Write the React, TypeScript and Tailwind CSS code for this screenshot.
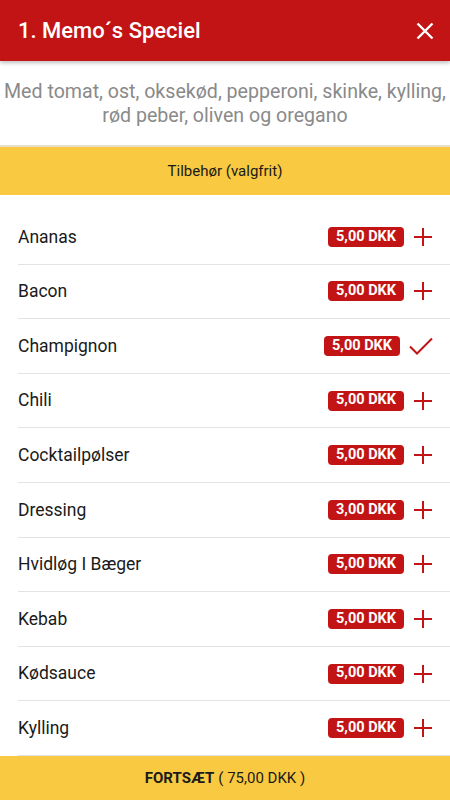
import { useState } from "react";

const extras = [
  { name: "Ananas", price: "5,00 DKK" },
  { name: "Bacon", price: "5,00 DKK" },
  { name: "Champignon", price: "5,00 DKK", selected: true },
  { name: "Chili", price: "5,00 DKK" },
  { name: "Cocktailpølser", price: "5,00 DKK" },
  { name: "Dressing", price: "3,00 DKK" },
  { name: "Hvidløg I Bæger", price: "5,00 DKK" },
  { name: "Kebab", price: "5,00 DKK" },
  { name: "Kødsauce", price: "5,00 DKK" },
  { name: "Kylling", price: "5,00 DKK" },
];

function PlusIcon() {
  return (
    <svg width="20" height="20" viewBox="0 0 20 20" className="shrink-0">
      <path d="M10 1v18M1 10h18" stroke="#c21414" strokeWidth="2" fill="none" />
    </svg>
  );
}

function CheckIcon() {
  return (
    <svg width="24" height="20" viewBox="0 0 24 20" className="shrink-0">
      <path d="M1 10.5l7 7L23 2.5" stroke="#c21414" strokeWidth="2" fill="none" />
    </svg>
  );
}

export default function App() {
  const [selected, setSelected] = useState<string[]>(
    extras.filter((e) => e.selected).map((e) => e.name)
  );

  const toggle = (name: string) =>
    setSelected((s) => (s.includes(name) ? s.filter((n) => n !== name) : [...s, name]));

  return (
    <div className="h-[800px] w-full flex flex-col bg-white overflow-hidden font-['Roboto',sans-serif]">
      {/* Header */}
      <div className="h-[61px] shrink-0 bg-[#c21414] flex items-center justify-between pl-[18px] pr-[16px] shadow-[0_2px_4px_rgba(0,0,0,0.25)] relative z-10">
        <h1 className="text-white text-[22px] font-medium">1. Memo´s Speciel</h1>
        <svg width="18" height="18" viewBox="0 0 18 18">
          <path d="M1.5 1.5l15 15M16.5 1.5l-15 15" stroke="#fff" strokeWidth="2.4" fill="none" />
        </svg>
      </div>

      {/* Description */}
      <div className="h-[86px] shrink-0 flex items-center justify-center px-1 border-b-2 border-[#e6dfcf]">
        <p className="text-center text-[#8a8a8a] text-[19.6px] leading-[24px] pt-[2px]">
          Med tomat, ost, oksekød, pepperoni, skinke, kylling, rød peber, oliven og oregano
        </p>
      </div>

      {/* Section title */}
      <div className="h-[48px] shrink-0 bg-[#f8c941] flex items-center justify-center">
        <span className="text-[15px] text-[#1a1a1a]">Tilbehør (valgfrit)</span>
      </div>

      {/* List */}
      <div className="flex-1 min-h-0 overflow-hidden pt-[15px]">
        {extras.map((e) => {
          const isOn = selected.includes(e.name);
          return (
            <div
              key={e.name}
              onClick={() => toggle(e.name)}
              className="ml-[18px] h-[54.6px] flex items-center justify-between border-b border-[#e3e3e3] pr-[17px]"
            >
              <span className="text-[17.5px] text-[#1a1a1a]">{e.name}</span>
              <div className="flex items-center gap-[9px]">
                <span className="bg-[#c21414] text-white text-[14.5px] font-bold leading-none rounded-[4px] px-[8px] h-[20px] flex items-center">
                  {e.price}
                </span>
                {isOn ? <CheckIcon /> : <PlusIcon />}
              </div>
            </div>
          );
        })}
      </div>

      {/* Footer */}
      <div className="h-[44px] shrink-0 bg-[#f8c941] flex items-center justify-center text-[15px] text-[#1a1a1a]">
        <span className="font-bold">FORTSÆT</span>
        <span className="ml-1">( 75,00 DKK )</span>
      </div>
    </div>
  );
}
